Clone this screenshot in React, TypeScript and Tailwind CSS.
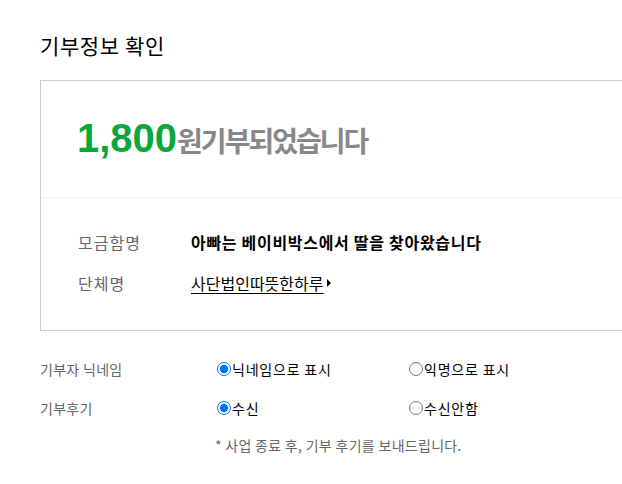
import React from "react";

const font = { fontFamily: '"Noto Sans CJK KR", "Liberation Sans", sans-serif' };

function RadioOption({ name, label, checked }: { name: string; label: string; checked?: boolean }) {
  return (
    <label className="flex items-center text-[14px] text-black tracking-[0.8px]">
      <input type="radio" name={name} defaultChecked={checked} className="m-0 mr-[1px] w-[14px] h-[14px]" />
      {label}
    </label>
  );
}

export default function App() {
  return (
    <div className="w-[622px] h-[484px] overflow-hidden bg-white" style={font}>
      <div className="pl-[40px] pt-[30px]">
        <h2 className="text-[21px] leading-[30px] tracking-[0.6px] text-black">기부정보 확인</h2>

        <div className="mt-[20px] w-[640px] border border-[#cccccc]">
          <div className="h-[117px] pl-[36px] pt-[35px] flex items-baseline border-b border-[#eeeeee]">
            <span className="text-[40px] leading-[44px] font-bold text-[#0aa83c]" style={{ fontFamily: '"Liberation Sans", Arial, sans-serif' }}>
              1,800
            </span>
            <span className="text-[28px] font-bold text-[#888888] tracking-[-2px]">원기부되었습니다</span>
          </div>

          <div className="h-[132px] pl-[37px] pt-[31px] flex flex-col gap-[15px]">
            <div className="flex items-center h-[26px]">
              <span className="w-[113px] text-[16px] text-[#666666] tracking-[1px]">모금함명</span>
              <span className="text-[16px] font-bold text-black tracking-[0.7px]">아빠는 베이비박스에서 딸을 찾아왔습니다</span>
            </div>
            <div className="flex items-center h-[26px]">
              <span className="w-[113px] text-[16px] text-[#666666] tracking-[1px]">단체명</span>
              <a className="text-[16px] text-black underline underline-offset-[3px] tracking-[0px]">사단법인따뜻한하루</a>
              <span className="ml-[4px] w-0 h-0 border-y-[4px] border-y-transparent border-l-[4px] border-l-black" />
            </div>
          </div>
        </div>

        <div className="mt-[26px] flex items-center h-[24px]">
          <span className="w-[177px] text-[14px] text-[#666666] tracking-[0.3px]">기부자 닉네임</span>
          <div className="w-[192px]">
            <RadioOption name="nick" label="닉네임으로 표시" checked />
          </div>
          <RadioOption name="nick" label="익명으로 표시" />
        </div>

        <div className="mt-[15px] flex items-center h-[24px]">
          <span className="w-[177px] text-[14px] text-[#666666] tracking-[0.3px]">기부후기</span>
          <div className="w-[192px]">
            <RadioOption name="review" label="수신" checked />
          </div>
          <RadioOption name="review" label="수신안함" />
        </div>

        <p className="mt-[15px] ml-[175px] text-[14px] text-[#666666] tracking-[0.3px]">* 사업 종료 후, 기부 후기를 보내드립니다.</p>
      </div>
    </div>
  );
}
